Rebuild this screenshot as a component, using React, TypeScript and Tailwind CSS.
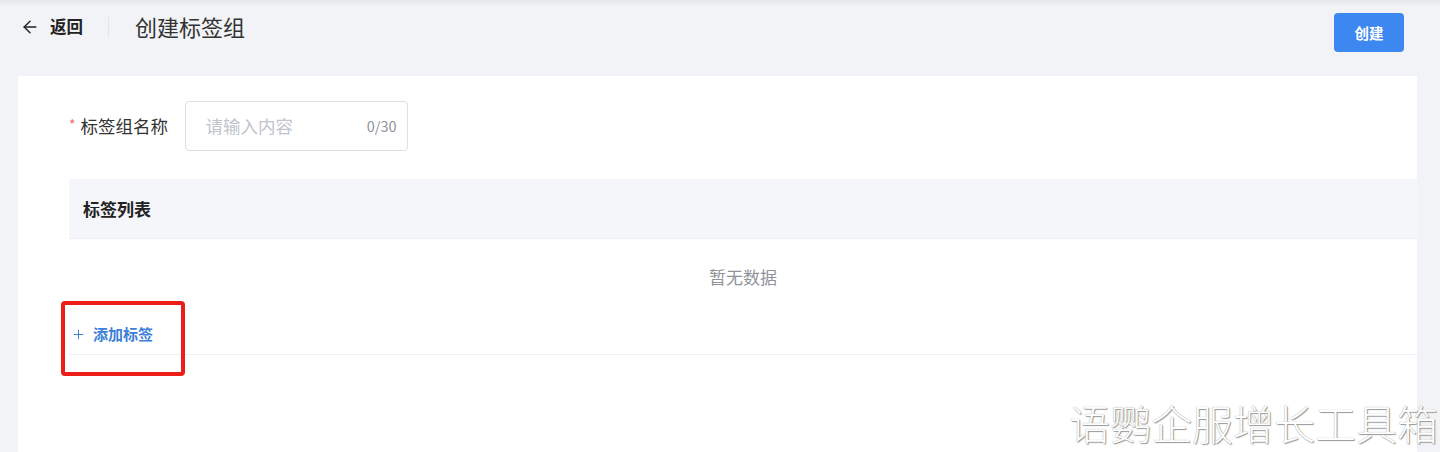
import { ArrowLeft, Plus } from "lucide-react";

export default function App() {
  return (
    <div
      className="relative h-[452px] w-[1440px] overflow-hidden bg-[#f2f3f6]"
      style={{ fontFamily: '"Noto Sans CJK SC", "Noto Sans", sans-serif' }}
    >
      {/* top shade */}
      <div className="absolute inset-x-0 top-0 h-[6px] bg-gradient-to-b from-[#e4e6ea] to-transparent" />

      {/* Header */}
      <div className="flex h-[76px] items-start justify-between pl-[20px] pr-[36px]">
        <div className="flex h-[53px] items-center">
          <button className="flex items-center gap-[10px] text-[#222]">
            <ArrowLeft className="h-[20px] w-[20px]" strokeWidth={1.7} />
            <span className="text-[16.5px] font-bold">返回</span>
          </button>
          <div className="ml-[25px] mr-[26px] h-[20px] w-px bg-[#e3e5e9]" />
          <h1 className="text-[22px] text-[#333]">创建标签组</h1>
        </div>
        <button className="mt-[13px] h-[39px] w-[70px] rounded-[4px] bg-[#3d87f1] text-[14.5px] font-bold text-white">
          创建
        </button>
      </div>

      {/* Card */}
      <div className="ml-[18px] h-[376px] w-[1399px] bg-white pl-[51px] pt-[25px]">
        {/* Form row */}
        <div className="flex items-center">
          <span className="mr-[5px] mt-[-3px] text-[14px] text-[#f56c6c]">*</span>
          <span className="w-[104px] text-[17.5px] text-[#333]">标签组名称</span>
          <div className="flex h-[50px] w-[223px] items-center justify-between rounded-[4px] border border-[#dcdfe6] pl-[20px] pr-[10px]">
            <span className="text-[17.5px] text-[#c0c4cc]">请输入内容</span>
            <span className="text-[14.5px] text-[#909399]">0/30</span>
          </div>
        </div>

        {/* Table */}
        <div className="mt-[28px]">
          <div className="flex h-[60px] items-center border-b border-[#ebeef5] bg-[#f5f6f9] pl-[14px]">
            <span className="text-[17px] font-bold text-[#222]">标签列表</span>
          </div>
          <div className="flex h-[76px] items-center justify-center pb-[1px]">
            <span className="text-[17px] text-[#909399]">暂无数据</span>
          </div>
          <div className="relative flex h-[40px] items-center border-b border-[#ebeef5]">
            <button className="ml-[2px] flex items-center gap-[7px] text-[#3c80d8]">
              <Plus className="h-[15px] w-[15px]" strokeWidth={1.6} />
              <span className="text-[15px] font-bold">添加标签</span>
            </button>
            <div className="absolute left-[-8px] top-[-14px] h-[75px] w-[124px] rounded-[4px] border-[4px] border-[#ec1e17]" />
          </div>
        </div>
      </div>

      {/* Watermark */}
      <div className="absolute right-[2px] top-[402px] text-[41px] font-light leading-none text-white [text-shadow:0_0_1px_#8c8c8c,1px_1px_1px_#9a9a9a]">
        语鹦企服增长工具箱
      </div>
    </div>
  );
}
